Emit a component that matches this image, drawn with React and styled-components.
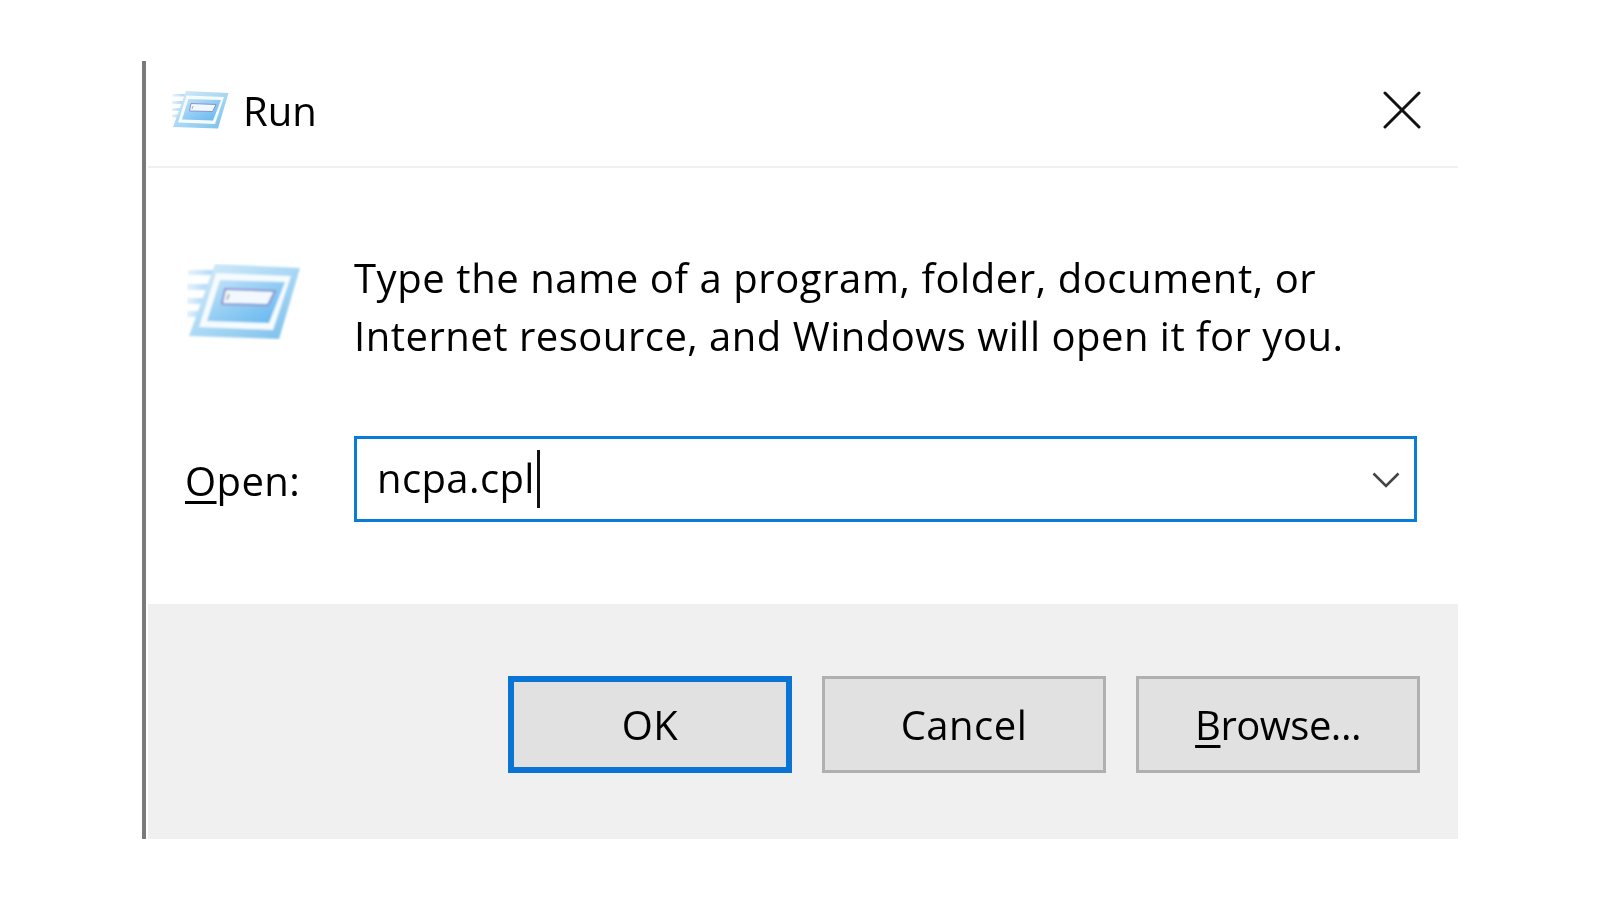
import React from 'react';
import styled, { createGlobalStyle } from 'styled-components';

const Global = createGlobalStyle`
  html, body { margin: 0; padding: 0; background: #fff; }
  body { font-family: "Open Sans", "Noto Sans", "Liberation Sans", sans-serif; color: #000; }
`;

const Page = styled.div`
  width: 1600px;
  height: 900px;
  padding: 61px 0 0 142px;
  box-sizing: border-box;
  overflow: hidden;
`;

const Dialog = styled.div`
  width: 1316px;
  height: 778px;
  box-sizing: border-box;
  border-left: 4px solid #7a7a7a;
  background: #fff;
  display: flex;
  flex-direction: column;
`;

const TitleBar = styled.div`
  height: 107px;
  box-sizing: border-box;
  margin-left: 2px;
  border-bottom: 2px solid #f0f0f0;
  padding: 0 37px 7px 24px;
  display: flex;
  align-items: center;
`;

const Title = styled.div`
  font-size: 40px;
  line-height: 56px;
  margin-left: 14px;
  padding-top: 2px;
  flex: 1;
  filter: blur(0.6px);
`;

const Content = styled.div`
  padding: 81px 0 0 41px;
  display: grid;
  grid-template-columns: 167px 1063px;
  grid-template-rows: 116px 86px;
  row-gap: 71px;
`;

const BigIconWrap = styled.div`
  padding-top: 15px;
`;

const Message = styled.div`
  font-size: 40px;
  line-height: 58px;
  white-space: nowrap;
  filter: blur(0.6px);
`;

const MessageLine = styled.div`
  letter-spacing: ${p => p.$tracking}px;
`;

const OpenLabel = styled.label`
  font-size: 40px;
  letter-spacing: 0.4px;
  align-self: center;
  margin: 2px 0 0 -2px;
  filter: blur(0.6px);
  u { text-decoration-thickness: 3px; text-underline-offset: 5px; }
`;

const Combo = styled.div`
  box-sizing: border-box;
  border: 3px solid #0a7bd6;
  display: flex;
  align-items: center;
  padding: 0 14px 0 20px;
`;

const ComboText = styled.div`
  font-size: 40px;
  letter-spacing: 0.4px;
  flex: 1;
  display: flex;
  align-items: center;
  span:first-child { margin-top: -4px; filter: blur(0.6px); }
`;

const Caret = styled.span`
  width: 3px;
  height: 58px;
  margin-left: 2px;
  background: #111;
`;

const Chevron = styled.svg`
  margin-top: 2px;
`;

const Footer = styled.div`
  margin: auto 0 0 2px;
  height: 235px;
  box-sizing: border-box;
  background: #f0f0f0;
  padding: 72px 38px 0 0;
  display: flex;
  justify-content: flex-end;
  align-items: flex-start;
  gap: 30px;
`;

const Button = styled.div`
  width: 284px;
  height: 97px;
  box-sizing: border-box;
  background: #e1e1e1;
  border: ${p => (p.$primary ? '6px solid #0a74d4' : '3px solid #b0b0b0')};
  font-size: 40px;
  display: flex;
  align-items: center;
  justify-content: center;
  letter-spacing: ${p => p.$tracking || 0}px;
  u { text-decoration-thickness: 3px; text-underline-offset: 5px; }
  span { filter: blur(0.6px); }
`;

const RunIcon = ({ id, width, height }) => (
  <svg width={width} height={height} viewBox="0 0 114 76" style={{ display: 'block', flex: 'none' }}>
    <defs>
      <linearGradient id={`${id}o`} x1="0" y1="0" x2="1" y2="1">
        <stop offset="0" stopColor="#d8ecf9" />
        <stop offset="0.55" stopColor="#a5d6f4" />
        <stop offset="1" stopColor="#78bdea" />
      </linearGradient>
      <linearGradient id={`${id}i`} x1="0" y1="0" x2="1" y2="1">
        <stop offset="0" stopColor="#c4e3f8" />
        <stop offset="1" stopColor="#5fb5ef" />
      </linearGradient>
      <linearGradient id={`${id}s`} x1="0" y1="0" x2="1" y2="0">
        <stop offset="0" stopColor="#e6f3fc" />
        <stop offset="1" stopColor="#a9d6f5" />
      </linearGradient>
      <filter id={`${id}b`}>
        <feGaussianBlur stdDeviation="1" />
      </filter>
    </defs>
    <g filter={`url(#${id}b)`}>
      <rect x="1" y="6" width="28" height="5" fill={`url(#${id}s)`} />
      <rect x="0" y="20" width="24" height="6" fill={`url(#${id}s)`} />
      <rect x="0" y="34" width="20" height="6" fill={`url(#${id}s)`} />
      <rect x="0" y="47" width="16" height="6" fill={`url(#${id}s)`} />
      <path d="M28 0 L113 4 L92 75 L2 72 Z" fill={`url(#${id}o)`} />
      <path d="M29 9 L104 12 L86 66 L12 63 Z" fill="#f6fbfe" />
      <path d="M33 16 L98 18 L82 59 L20 57 Z" fill={`url(#${id}i)`} />
      <path d="M38 25 L88 27 L81 41 L35 40 Z" fill="#f2f9fe" stroke="#8a94d0" strokeWidth="2" strokeLinejoin="round" />
      <path d="M42 30 L40 36" stroke="#999" strokeWidth="1.5" />
    </g>
  </svg>
);

export default function App() {
  return (
    <Page>
      <Global />
      <Dialog>
        <TitleBar>
          <RunIcon id="small" width={57} height={38} />
          <Title>Run</Title>
          <svg width="38" height="38" viewBox="0 0 38 38">
            <path d="M2 2 L36 36 M36 2 L2 36" stroke="#111" strokeWidth="3" strokeLinecap="round" />
          </svg>
        </TitleBar>
        <Content>
          <BigIconWrap>
            <RunIcon id="big" width={114} height={76} />
          </BigIconWrap>
          <Message>
            <MessageLine $tracking={0.58}>Type the name of a program, folder, document, or</MessageLine>
            <MessageLine $tracking={0.5}>Internet resource, and Windows will open it for you.</MessageLine>
          </Message>
          <OpenLabel>
            <u>O</u>pen:
          </OpenLabel>
          <Combo>
            <ComboText>
              <span>ncpa.cpl</span>
              <Caret />
            </ComboText>
            <Chevron width="28" height="16" viewBox="0 0 28 16">
              <path d="M1.5 1.5 L14 14 L26.5 1.5" fill="none" stroke="#444" strokeWidth="2.6" />
            </Chevron>
          </Combo>
        </Content>
        <Footer>
          <Button $primary $tracking={0.4}><span>OK</span></Button>
          <Button $tracking={0.5}><span>Cancel</span></Button>
          <Button $tracking={-0.5}><span><u>B</u>rowse...</span></Button>
        </Footer>
      </Dialog>
    </Page>
  );
}
